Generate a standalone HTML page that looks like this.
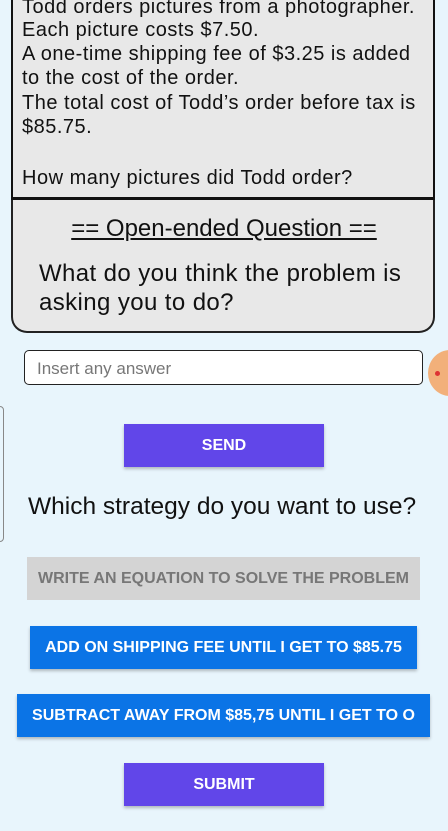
<!DOCTYPE html>
<html><head><style>
body{margin:0;width:448px;height:831px;background:#e8f5fc;font-family:"Liberation Sans",sans-serif;position:relative;overflow:hidden}
.a{position:absolute}
.box1{left:11px;top:-10px;width:420px;height:205px;background:#e8e8e8;border:2px solid #111;border-bottom-width:3px}
.t{position:absolute;left:22px;font-size:20px;letter-spacing:0.5px;color:#111;line-height:24px}
.box2{left:11px;top:200px;width:420px;height:131px;background:#e8e8e8;border:2px solid #222;border-top:none;border-radius:0 0 16px 16px}
.btn{position:absolute;height:43px;color:#fff;font-size:16px;font-weight:bold;display:flex;align-items:center;justify-content:center;box-shadow:0 2px 3px rgba(0,0,0,.25);white-space:nowrap}
.p{background:#6146e9}
.b{background:#0b74e6}
</style></head><body>
<div class="a box1"></div>
<div class="t" style="top:-5px">Todd orders pictures from a photographer.</div>
<div class="t" style="top:18px">Each picture costs $7.50.</div>
<div class="t" style="top:42px">A one-time shipping fee of $3.25 is added</div>
<div class="t" style="top:66px">to the cost of the order.</div>
<div class="t" style="top:91px">The total cost of Todd’s order before tax is</div>
<div class="t" style="top:115px">$85.75.</div>
<div class="t" style="top:166px">How many pictures did Todd order?</div>
<div class="a box2"></div>
<div class="a" style="left:0;width:448px;top:215px;text-align:center;font-size:24px;text-decoration:underline;color:#111">== Open-ended Question ==</div>
<div class="a" style="left:39px;top:259px;font-size:24px;letter-spacing:0.4px;line-height:29px;color:#111">What do you think the problem is<br>asking you to do?</div>
<div class="a" style="left:24px;top:350px;width:397px;height:33px;border:1.5px solid #222;border-radius:5px;background:#fff"></div>
<div class="a" style="left:37px;top:359px;font-size:17px;color:#777">Insert any answer</div>
<div class="a" style="left:428px;top:350px;width:44px;height:46px;border-radius:50%;background:#f2b07a"></div>
<div class="a" style="left:435px;top:371px;width:5px;height:5px;border-radius:50%;background:#d33"></div>
<div class="a" style="left:-6px;top:406px;width:8px;height:134px;border:1px solid #888;border-radius:4px"></div>
<div class="btn p" style="left:124px;top:424px;width:200px">SEND</div>
<div class="a" style="left:28px;top:493px;font-size:24.5px;color:#111">Which strategy do you want to use?</div>
<div class="btn" style="left:27px;top:557px;width:393px;background:#d4d4d4;color:#777;box-shadow:none">WRITE AN EQUATION TO SOLVE THE PROBLEM</div>
<div class="btn b" style="left:30px;top:626px;width:387px">ADD ON SHIPPING FEE UNTIL I GET TO $85.75</div>
<div class="btn b" style="left:17px;top:694px;width:413px">SUBTRACT AWAY FROM $85,75 UNTIL I GET TO O</div>
<div class="btn p" style="left:124px;top:763px;width:200px">SUBMIT</div>
</body></html>
